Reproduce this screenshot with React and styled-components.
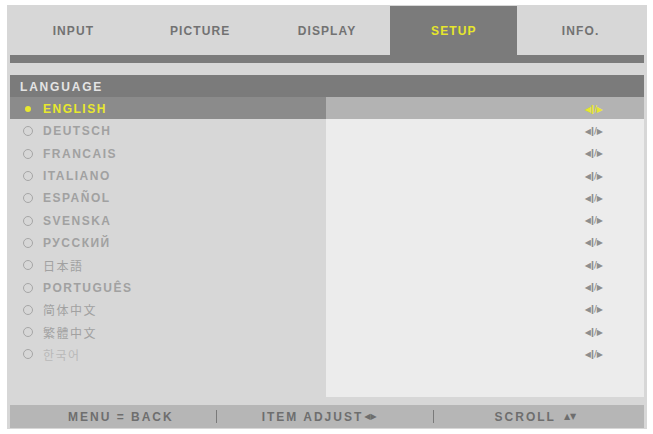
import styled, { createGlobalStyle } from 'styled-components'

const GlobalStyle = createGlobalStyle`
body {
  margin: 0;
  background: #ffffff;
  font-family: "Liberation Sans", Arial, sans-serif;
}
`

const Frame = styled.div`
box-sizing: border-box;
margin: 5px 0 0 7px;
width: 640px;
height: 424px;
padding: 1px 3px 1px 3px;
background: #d7d7d7;
display: flex;
flex-direction: column;
`

const Tabs = styled.div`
display: flex;
height: 49px;
`

const Tab = styled.div`
flex: 1;
display: flex;
align-items: center;
justify-content: center;
font-size: 12px;
font-weight: bold;
letter-spacing: 1.1px;
padding-top: 1px;
color: ${p => (p.$active ? '#e6e62c' : '#727272')};
background: ${p => (p.$active ? '#7b7b7b' : 'transparent')};
`

const TabRule = styled.div`
height: 8px;
background: #7b7b7b;
margin-bottom: 12px;
`

const Header = styled.div`
height: 22px;
display: flex;
align-items: center;
padding: 1px 0 0 10px;
box-sizing: border-box;
background: #7b7b7b;
color: #e4e4e4;
font-size: 12px;
font-weight: bold;
letter-spacing: 1.8px;
`

const Body = styled.div`
display: flex;
height: 300px;
`

const LabelColumn = styled.div`
width: 316px;
display: flex;
flex-direction: column;
`

const ValueColumn = styled.div`
flex: 1;
display: flex;
flex-direction: column;
background: #ececec;
`

const LabelRow = styled.div`
box-sizing: border-box;
height: 22.3px;
display: flex;
align-items: center;
padding: 2px 0 0 13px;
background: ${p => (p.$selected ? '#8b8b8b' : 'transparent')};
`

const Radio = styled.span`
box-sizing: border-box;
width: 10px;
height: 10px;
margin-right: 10px;
border-radius: 50%;
border: ${p => (p.$selected ? 'none' : '1.5px solid #a6a6a6')};
display: flex;
align-items: center;
justify-content: center;

&::after {
  content: '';
  display: ${p => (p.$selected ? 'block' : 'none')};
  width: 6px;
  height: 6px;
  border-radius: 50%;
  background: #e8e82e;
}
`

const Label = styled.span`
font-size: 12px;
font-weight: ${p => (p.$cjk ? 'normal' : 'bold')};
letter-spacing: 1.5px;
font-family: ${p =>
    p.$cjk
      ? '"Noto Sans CJK JP", "Noto Sans CJK SC", "Noto Sans CJK KR", sans-serif'
      : '"Liberation Sans", Arial, sans-serif'};
color: ${p => (p.$selected ? '#e8e82e' : p.$faint ? '#b9b9b9' : '#a1a1a1')};
`

const ValueRow = styled.div`
box-sizing: border-box;
height: 22.3px;
display: flex;
align-items: center;
justify-content: flex-end;
padding: 2px 41px 0 0;
background: ${p => (p.$selected ? '#b3b3b3' : 'transparent')};
`

const Adjust = styled.span`
font-family: "DejaVu Sans", sans-serif;
font-size: 8px;
font-weight: bold;
color: ${p => (p.$selected ? '#e8e82e' : '#8e8e8e')};
white-space: nowrap;
`

const Footer = styled.div`
margin-top: 8px;
height: 23px;
display: flex;
align-items: center;
padding-left: 58px;
background: #b6b6b6;
color: #6e6e6e;
font-size: 12px;
font-weight: bold;
letter-spacing: 2px;
`

const FooterItem = styled.span`
margin-left: ${p => p.$lead || 0}px;
white-space: nowrap;
`

const Arrows = styled.span`
font-family: "DejaVu Sans", sans-serif;
font-size: 8px;
letter-spacing: 0;
margin-left: ${p => p.$lead || 0}px;
`

const Separator = styled.span`
margin-left: ${p => p.$lead}px;
width: 1px;
height: 13px;
background: #7a7a7a;
`

const tabs = ['INPUT', 'PICTURE', 'DISPLAY', 'SETUP', 'INFO.']

const languages = [
  { name: 'ENGLISH' },
  { name: 'DEUTSCH' },
  { name: 'FRANCAIS' },
  { name: 'ITALIANO' },
  { name: 'ESPAÑOL' },
  { name: 'SVENSKA' },
  { name: 'РУССКИЙ' },
  { name: '日本語', cjk: true },
  { name: 'PORTUGUÊS' },
  { name: '简体中文', cjk: true },
  { name: '繁體中文', cjk: true },
  { name: '한국어', cjk: true, faint: true },
]

export default function App() {
  return (
    <>
      <GlobalStyle />
      <Frame>
        <Tabs>
          {tabs.map(t => (
            <Tab key={t} $active={t === 'SETUP'}>{t}</Tab>
          ))}
        </Tabs>
        <TabRule />
        <Header>LANGUAGE</Header>
        <Body>
          <LabelColumn>
            {languages.map((l, i) => (
              <LabelRow key={l.name} $selected={i === 0}>
                <Radio $selected={i === 0} />
                <Label $selected={i === 0} $cjk={l.cjk} $faint={l.faint}>{l.name}</Label>
              </LabelRow>
            ))}
          </LabelColumn>
          <ValueColumn>
            {languages.map((l, i) => (
              <ValueRow key={l.name} $selected={i === 0}>
                <Adjust $selected={i === 0}>◀ǀ/▶</Adjust>
              </ValueRow>
            ))}
          </ValueColumn>
        </Body>
        <Footer>
          <FooterItem>MENU = BACK</FooterItem>
          <Separator $lead={42} />
          <FooterItem $lead={45}>ITEM ADJUST</FooterItem>
          <Arrows $lead={1}>◀▶</Arrows>
          <Separator $lead={56} />
          <FooterItem $lead={61}>SCROLL</FooterItem>
          <Arrows $lead={8}>▲▼</Arrows>
        </Footer>
      </Frame>
    </>
  )
}
